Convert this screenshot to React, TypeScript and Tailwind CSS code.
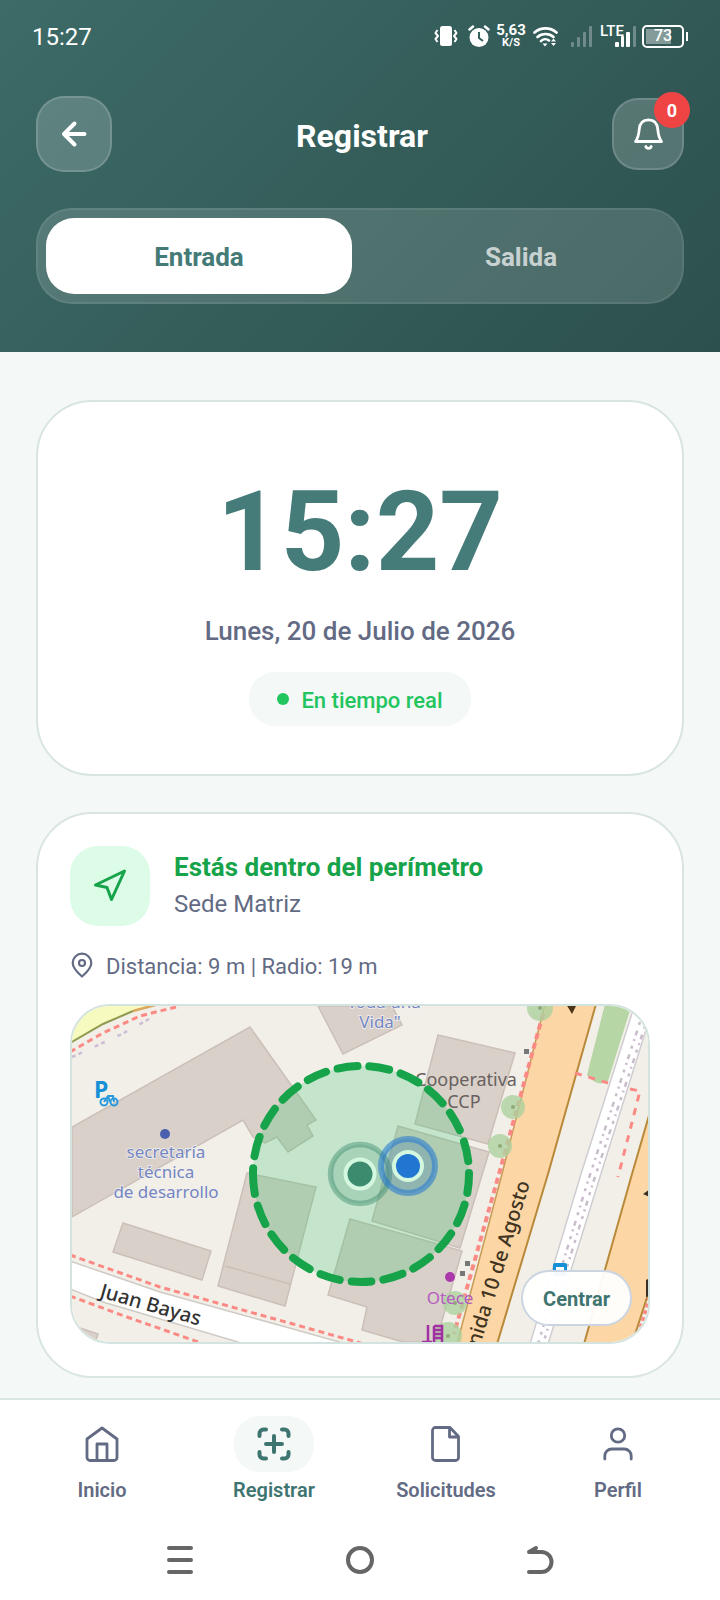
import React, { useState } from "react";

type Mode = "entrada" | "salida";

const StatusBar = () => (
  <div className="flex h-[72px] items-center justify-between px-8 text-white">
    <span className="pt-0.5 text-2xl leading-7">15:27</span>
    <div className="flex items-center">
      {/* Vibrate */}
      <svg width="24" height="22" viewBox="0 0 24 22" fill="none" stroke="currentColor" strokeWidth="2">
        <rect x="6" y="1" width="12" height="20" rx="2.5" fill="currentColor" stroke="none" />
        <path d="M3.500 5 1.500 8 4 11 1.500 14 3.500 17M20.500 5l2 3L20 11l2.500 3L20.500 17" strokeLinejoin="round" />
      </svg>
      {/* Alarm */}
      <svg className="ml-2.5" width="22" height="22" viewBox="0 0 22 22" fill="none" stroke="currentColor">
        <circle cx="11" cy="12.500" r="9.500" fill="currentColor" stroke="none" />
        <path d="M1.500 4.500 5 1.500M20.500 4.500 17 1.500" strokeWidth="2.500" strokeLinecap="round" />
        <path d="M11 7v6l4 3" stroke="#34605c" strokeWidth="2" />
      </svg>
      <div className="ml-[7px] flex w-7 flex-col items-center font-bold">
        <span className="text-[15px] leading-[13px]">5,63</span>
        <span className="text-[11px] leading-[11px]">K/S</span>
      </div>
      {/* Wifi */}
      <svg className="ml-2" width="25" height="21" viewBox="0 0 25 21" fill="none" stroke="currentColor" strokeWidth="2.600" strokeLinecap="round">
        <path d="M1.500 6.500c6-5.500 16-5.500 22 0M4.500 11c4.500-4 11.500-4 16 0M8 15c2-2.200 5.500-2.400 8-.5" />
        <path d="M9.500 17.500h5L12 20.500z" fill="currentColor" stroke="none" />
        <path d="M20.500 12.500 23 15.500h-5zM20.500 20l2.500-3h-5z" fill="currentColor" stroke="none" />
      </svg>
      <svg className="ml-3" width="22" height="22" viewBox="0 0 22 22" fill="white" fillOpacity="0.3">
        <rect x="1" y="17" width="3" height="5" rx="1" />
        <rect x="7" y="12" width="3" height="10" rx="1" />
        <rect x="13" y="7" width="3" height="15" rx="1" />
        <rect x="19" y="1" width="3" height="21" rx="1" />
      </svg>
      <div className="relative ml-2 h-[22px] w-9">
        <span className="absolute left-0 top-0 text-[15px] font-medium leading-[12px]">LTE</span>
        <svg className="absolute right-0 top-0" width="21" height="22" viewBox="0 0 21 22" fill="white">
          <rect x="0" y="17" width="4" height="5" rx="1" />
          <rect x="6" y="11" width="3" height="11" rx="1" />
          <rect x="11" y="7" width="4" height="15" rx="1" />
          <rect x="18" y="1" width="3" height="21" rx="1" fillOpacity="0.3" />
        </svg>
      </div>
      <div className="ml-1.5 flex items-center">
        <div className="relative flex h-[23px] w-[42px] items-center justify-center rounded-[5px] border-2 border-white">
          <div className="absolute inset-y-[2px] left-[2px] w-[25px] bg-white/40" />
          <span className="relative text-[16px] font-medium leading-[18px]">73</span>
        </div>
        <div className="ml-0.5 h-[9px] w-0.5 bg-white" />
      </div>
    </div>
  </div>
);

const ScreenHeader = () => (
  <div className="mt-6 flex items-center justify-between px-9">
    <button
      aria-label="Volver"
      className="flex h-[76px] w-[76px] items-center justify-center rounded-[28px] border-2 border-white/15 bg-white/18 text-white"
    >
      <svg width="28" height="28" viewBox="0 0 28 28" fill="none" stroke="currentColor" strokeWidth="4" strokeLinecap="round" strokeLinejoin="round">
        <path d="M24.500 14H4M14.500 3.500 4 14l10.500 10.500" />
      </svg>
    </button>
    <h1 className="pt-1 text-[32px] font-bold leading-10 text-white">Registrar</h1>
    <button
      aria-label="Notificaciones"
      className="relative flex h-[72px] w-[72px] items-center justify-center rounded-[26px] border-2 border-white/15 bg-white/18 text-white"
    >
      <svg width="36" height="36" viewBox="0 0 36 36" fill="none" stroke="currentColor" strokeWidth="2.800" strokeLinecap="round" strokeLinejoin="round">
        <path d="M5.500 25.500C8 22 8.800 18.500 9.200 13.500 9.700 7 13 3.800 18.500 3.800S27.300 7 27.800 13.500C28.200 18.500 29 22 31.500 25.500Z" />
        <path d="M15.800 30.500c.8 2.400 4.600 2.400 5.400 0" />
      </svg>
      <span className="absolute -right-2 -top-2 flex h-9 w-9 items-center justify-center rounded-full bg-[#ef4444] pt-0.5 text-lg font-bold">
        0
      </span>
    </button>
  </div>
);

interface ModeTabsProps {
  mode: Mode;
  onChange: (mode: Mode) => void;
}

const ModeTabs = ({ mode, onChange }: ModeTabsProps) => {
  const tabs: { id: Mode; label: string }[] = [
    { id: "entrada", label: "Entrada" },
    { id: "salida", label: "Salida" },
  ];

  return (
    <div className="mx-9 mt-9 flex gap-4 rounded-[36px] border-2 border-white/8 bg-white/14 p-2">
      {tabs.map((tab) => (
        <button
          key={tab.id}
          onClick={() => onChange(tab.id)}
          className={`h-[76px] flex-1 rounded-[28px] pt-0.5 text-[26px] font-bold ${
            mode === tab.id ? "bg-white text-[#457b77]" : "text-white/70"
          }`}
        >
          {tab.label}
        </button>
      ))}
    </div>
  );
};

const ClockCard = () => (
  <section className="flex flex-col items-center rounded-[56px] border-2 border-[#d9e5e2] bg-white pb-12 pt-16">
    <p className="text-[111px] font-bold leading-[132px] text-[#457b79]">15:27</p>
    <p className="mt-4 text-[26px] font-medium leading-[34px] text-[#636b84]">Lunes, 20 de Julio de 2026</p>
    <div className="mt-6 flex h-[54px] items-center gap-3 rounded-[26px] bg-[#f4f8f7] px-7">
      <span className="h-3 w-3 rounded-full bg-[#22c55e]" />
      <span className="pt-0.5 text-[22px] font-medium text-[#22c55e]">En tiempo real</span>
    </div>
  </section>
);

const buildings = [
  "M2 123 180 23 246 116 237 121 243 132 218 148 207 133 195 139 183 133 173 116 2 213Z",
  "M248 2 273 50 332 21 322 2Z",
  "M368 31 445 49 418 140 345 120Z",
  "M328 122 419 148 390 244 302 217Z",
  "M280 215 392 247 366 338H333L292 326 297 303 258 291Z",
  "M177 169 246 183 215 302 148 282Z",
  "M53 219 141 247 132 276 43 248Z",
  "M10 324 28 330 25 339H2V326Z",
];

const trees = [
  [470, 4, 13],
  [443, 103, 12],
  [430, 142, 12],
  [385, 299, 12],
  [378, 332, 14],
];

const StreetMap = () => (
  <svg
    className="block h-full w-full"
    viewBox="2 2 576 336"
    preserveAspectRatio="xMidYMid slice"
    fontFamily="'Noto Sans', 'Open Sans', sans-serif"
    role="img"
    aria-label="Mapa de la sede"
  >
    <rect x="0" y="0" width="580" height="340" fill="#f2efe9" />

    {/* Yellow road in the corner */}
    <path d="M0 0V39L33 20 63 7 87 0Z" fill="#f7fabf" />
    <path d="M0 39 33 20 63 7" fill="none" stroke="#8f9a4e" strokeWidth="2" />
    <path d="M63 7 89 0" fill="none" stroke="#dba75c" strokeWidth="2.500" />
    <path d="M0 48 33 29 70 12 110 2" fill="none" stroke="#fb8a85" strokeWidth="3" strokeDasharray="6 4" />
    <path d="M2 53 50 31 90 9" fill="none" stroke="#cdbdd6" strokeWidth="2.500" strokeDasharray="4 3 4 14" />

    {/* Buildings */}
    <g fill="#d9d0c9" stroke="#cbc0b8" strokeWidth="1.500">
      {buildings.map((d) => (
        <path key={d} d={d} />
      ))}
      <path d="M155 262 220 280" />
    </g>

    {/* Juan Bayas */}
    <path d="M0 257 90 288 223 325 280 341H178L33 298 0 285Z" fill="#fff" stroke="#cfcac4" strokeWidth="1.500" />
    <path d="M0 251 90 283 223 320 294 340" fill="none" stroke="#fb8a85" strokeWidth="3" strokeDasharray="6 4" />
    <path d="M0 292 57 313 134 340" fill="none" stroke="#fb8a85" strokeWidth="3" strokeDasharray="6 4" />
    <text transform="translate(29 293) rotate(16)" fontSize="20" fontWeight="500" fill="#333">
      Juan Bayas
    </text>

    {/* Avenida 10 de Agosto */}
    <path d="M475 0 432 170 387 340H428L478 170 526 0Z" fill="#fcd6a4" />
    <path d="M526 0 478 170 427 340" fill="none" stroke="#b9893a" strokeWidth="2" />
    <path d="M475 0 432 170 387 340" fill="none" stroke="#c79a55" strokeWidth="1.500" />
    <path d="M473 10 429 170 384 330" fill="none" stroke="#fb8a85" strokeWidth="4" strokeDasharray="6 4" />
    <path d="M496 0h11l-5 10z" fill="#4a3317" />
    {trees.map(([cx, cy, r]) => (
      <g key={`${cx}-${cy}`} fill="#add19e">
        <circle cx={cx} cy={cy} r={r} fillOpacity="0.8" />
        <circle cx={cx} cy={cy} r="2" fill="#94a878" />
      </g>
    ))}
    <text transform="translate(460 179) rotate(-73)" textAnchor="end" fontSize="20" fontWeight="500" fill="#40331f">
      Avenida 10 de Agosto
    </text>

    {/* Green strip and rail */}
    <path d="M535 0H562L538 77Q528 84 517 71Z" fill="#b7d6a6" />
    <path d="M565 0H584L529 176 478 340H460L511 170Z" fill="#fff" stroke="#cfcdd2" strokeWidth="1.500" />
    <path d="M570 18 517 180 468 340M575 22 524 176 473 340" fill="none" stroke="#c9bccb" strokeWidth="2.500" strokeDasharray="3 6 5 4 2 5" />
    <path d="M505 69 538 79M560 85 570 87 548 173" fill="none" stroke="#fb8a85" strokeWidth="3" strokeDasharray="7 7" />

    {/* Right carriageway */}
    <path d="M580 108 562 170 514 340H562L580 284Z" fill="#fcd6a4" />
    <path d="M580 108 562 170 514 340M580 284 562 340" fill="none" stroke="#b9893a" strokeWidth="2" />
    <path d="M580 293 568 332" fill="none" stroke="#fb8a85" strokeWidth="4" strokeDasharray="4 3" />
    <path d="M573 190 580 185V193ZM576 276 580 274V292L576 293Z" fill="#3a3124" />

    {/* Small posts */}
    <g fill="#777">
      <rect x="454" y="45" width="5" height="5" />
      <rect x="395" y="257" width="5" height="5" />
      <rect x="390" y="267" width="5" height="5" />
    </g>

    {/* Bicycle parking */}
    <text x="24" y="94" fontSize="23" fontWeight="700" fill="#1590d6">P</text>
    <g fill="none" stroke="#2b9add" strokeWidth="2">
      <circle cx="34" cy="98" r="3.500" />
      <circle cx="44" cy="98" r="3.500" />
      <path d="M34 98 38 92H43L44 98M38 92 40 98" />
    </g>

    {/* Bus stop */}
    <rect x="483" y="259" width="14" height="13" rx="2" fill="#1590d6" />
    <rect x="486" y="263" width="8" height="4" fill="#fff" />

    {/* Place names */}
    <g fill="#7385c2" stroke="#f4f1ee" strokeWidth="1.500" paintOrder="stroke" fontSize="17" textAnchor="middle">
      <circle cx="95" cy="130" r="5" fill="#4a60ae" stroke="none" />
      <text x="96" y="154">secretaría</text>
      <text x="96" y="174">técnica</text>
      <text x="96" y="194">de desarrollo</text>
      <text x="314" y="4">Toda una</text>
      <text x="310" y="24">Vida"</text>
    </g>
    <g fill="#68615f" fontSize="18" textAnchor="middle">
      <text x="396" y="82">Cooperativa</text>
      <text x="394" y="104">CCP</text>
    </g>
    <circle cx="380" cy="273" r="5" fill="#ac39ac" />
    <text x="380" y="300" fontSize="17" textAnchor="middle" fill="#b45cc0">Otece</text>
    <path d="M358 321v17M352 338h10M364 322h8v16M364 326h8M364 330h8M364 334h8M364 322v16" fill="none" stroke="#a32fa5" strokeWidth="2.500" />

    {/* Allowed radius */}
    <path
      d="M183 170a108 108 0 1 0 216 0a108 108 0 1 0 -216 0"
      fill="#22c55e"
      fillOpacity="0.22"
      stroke="#16a34a"
      strokeWidth="8"
      strokeLinecap="round"
      strokeDasharray="20 12"
    />

    {/* Site marker */}
    <circle cx="290" cy="170" r="29.500" fill="#3d8b6f" fillOpacity="0.2" stroke="#3d8b6f" strokeOpacity="0.45" strokeWidth="5.500" />
    <circle cx="290" cy="170" r="14.500" fill="#3d8b6f" stroke="#d3f7df" strokeWidth="4" />

    {/* User marker */}
    <circle cx="338" cy="162" r="27" fill="#2f6fae" fillOpacity="0.25" stroke="#2176d2" strokeOpacity="0.55" strokeWidth="6" />
    <circle cx="338" cy="162" r="14" fill="#2176d2" stroke="#d3f7df" strokeWidth="4" />
  </svg>
);

const LocationCard = () => (
  <section className="mt-9 rounded-[56px] border-2 border-[#d9e5e2] bg-white p-8">
    <div className="flex items-center gap-6">
      <div className="flex h-20 w-20 shrink-0 items-center justify-center rounded-[28px] bg-[#dcfce7] text-[#16a34a]">
        <svg width="36" height="36" viewBox="0 0 36 36" fill="none" stroke="currentColor" strokeWidth="3" strokeLinejoin="round">
          <path d="M32.500 3 3.500 17 15 19.500 19.500 31.500Z" />
        </svg>
      </div>
      <div>
        <h2 className="text-[26px] font-bold leading-9 text-[#16a34a]">Estás dentro del perímetro</h2>
        <p className="text-2xl leading-[38px] text-[#636b84]">Sede Matriz</p>
      </div>
    </div>

    <div className="mt-6 flex items-center gap-3 text-[22px] leading-[30px] text-[#636b84]">
      <svg width="24" height="26" viewBox="0 0 24 26" fill="none" stroke="currentColor" strokeWidth="2.200" strokeLinejoin="round">
        <path d="M12 24.500C8 21 2.700 16.500 2.700 11a9.300 9.300 0 0 1 18.600 0C21.300 16.500 16 21 12 24.500Z" />
        <circle cx="12" cy="11" r="3" />
      </svg>
      <span className="pt-1 leading-[26px]">Distancia: 9 m | Radio: 19 m</span>
    </div>

    <div className="relative mt-6 h-[340px] overflow-hidden rounded-[40px] border-2 border-[#d3e4e0]">
      <StreetMap />
      <button className="absolute bottom-4 right-4 h-14 rounded-full border-2 border-[#cbd5e1] bg-white/95 px-5 pt-0.5 text-xl font-bold text-[#3f7571]">
        Centrar
      </button>
    </div>
  </section>
);

const navItems = [
  {
    label: "Inicio",
    icon: (
      <>
        <path d="M3 13 18 2 33 13V31.500a3 3 0 0 1-3 3H6a3 3 0 0 1-3-3Z" />
        <path d="M13 34.500V18H23V34.500" />
      </>
    ),
  },
  {
    label: "Registrar",
    icon: (
      <path d="M3.500 10V7.500a4 4 0 0 1 4-4H10M26 3.500h2.500a4 4 0 0 1 4 4V10M32.500 26v2.500a4 4 0 0 1-4 4H26M10 32.500H7.500a4 4 0 0 1-4-4V26M18 10v16M10 18h16" />
    ),
  },
  {
    label: "Solicitudes",
    icon: <path d="M22 1.500H7.500a3 3 0 0 0-3 3v27a3 3 0 0 0 3 3h20a3 3 0 0 0 3-3V10.500ZM21.500 1.500V11h9" />,
  },
  {
    label: "Perfil",
    icon: (
      <>
        <circle cx="18" cy="9.500" r="6.700" />
        <path d="M4.800 33V30a7 7 0 0 1 7-7h12.400a7 7 0 0 1 7 7v3" />
      </>
    ),
  },
];

const BottomNav = () => (
  <nav className="flex border-t-2 border-[#d9e5e2] bg-white px-4 py-4">
    {navItems.map((item) => {
      const active = item.label === "Registrar";
      return (
        <a
          key={item.label}
          href="#"
          className={`flex flex-1 flex-col items-center gap-1.5 pb-0.5 ${active ? "text-[#3f7571]" : "text-[#636b84]"}`}
        >
          <span className={`flex h-14 w-20 items-center justify-center rounded-[26px] ${active ? "bg-[#f4f8f7]" : ""}`}>
            <svg
              width="36"
              height="36"
              viewBox="0 0 36 36"
              fill="none"
              stroke="currentColor"
              strokeWidth={active ? 4 : 2.8}
              strokeLinecap="round"
              strokeLinejoin="round"
            >
              {item.icon}
            </svg>
          </span>
          <span className="text-xl font-semibold leading-6">{item.label}</span>
        </a>
      );
    })}
  </nav>
);

const SystemBar = () => (
  <div className="flex h-20 items-center bg-white px-[90px] text-[#666]">
    <button aria-label="Recientes" className="flex flex-1 justify-center">
      <svg width="30" height="30" viewBox="0 0 30 30" fill="none" stroke="currentColor" strokeWidth="4" strokeLinecap="round">
        <path d="M4 3h22M4 15h22M4 27h22" />
      </svg>
    </button>
    <button aria-label="Inicio del sistema" className="flex flex-1 justify-center">
      <svg width="30" height="30" viewBox="0 0 30 30" fill="none" stroke="currentColor" strokeWidth="4">
        <circle cx="15" cy="15" r="12" />
      </svg>
    </button>
    <button aria-label="Atrás" className="flex flex-1 justify-center">
      <svg width="30" height="30" viewBox="0 0 30 30" fill="none" stroke="currentColor" strokeWidth="4" strokeLinecap="round" strokeLinejoin="round">
        <path d="M4 27H16.500a10 10 0 0 0 0-20H4L11 3" />
      </svg>
    </button>
  </div>
);

export default function App() {
  const [mode, setMode] = useState<Mode>("entrada");

  return (
    <div className="flex min-h-screen flex-col bg-[#f4f8f7] font-[Roboto,sans-serif]">
      <header className="bg-linear-135 from-[#3d6b67] to-[#2c504d] pb-12">
        <StatusBar />
        <ScreenHeader />
        <ModeTabs mode={mode} onChange={setMode} />
      </header>

      <main className="flex-1 px-9 pb-5 pt-12">
        <ClockCard />
        <LocationCard />
      </main>

      <BottomNav />
      <SystemBar />
    </div>
  );
}
